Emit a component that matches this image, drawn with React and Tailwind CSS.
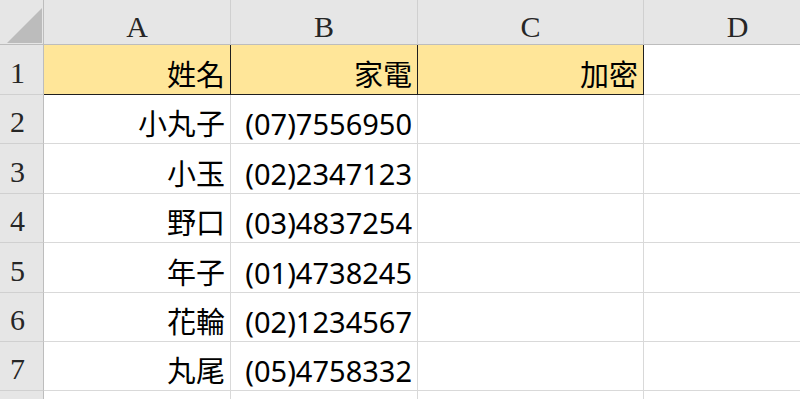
import React from 'react';

const cols = ['A', 'B', 'C', 'D'];
const rowHeights = ['h-[50px]', 'h-[49px]', 'h-[50px]', 'h-[49px]', 'h-[50px]', 'h-[49px]', 'h-[49px]', 'h-[49px]'];

const data = [
  ['姓名', '家電', '加密'],
  ['小丸子', '(07)7556950', ''],
  ['小玉', '(02)2347123', ''],
  ['野口', '(03)4837254', ''],
  ['年子', '(01)4738245', ''],
  ['花輪', '(02)1234567', ''],
  ['丸尾', '(05)4758332', ''],
  ['', '', ''],
];

const serif = { fontFamily: '"Liberation Serif", "DejaVu Serif", serif' };
const body = { fontFamily: '"Noto Sans", "Noto Sans CJK TC", sans-serif' };

export default function App() {
  return (
    <div className="w-[800px] h-[399px] overflow-hidden bg-white">
      <div className="grid grid-cols-[44px_187px_187px_226px_188px]">
        {/* Corner */}
        <div className="h-[45px] bg-[#e6e6e6] border-r border-b border-[#bdbdbd] flex items-end justify-end p-[1px]">
          <svg width="35" height="35" viewBox="0 0 35 35">
            <polygon points="0,35 35,35 35,0" fill="#bcbcbc" />
          </svg>
        </div>
        {/* Column headers */}
        {cols.map((c) => (
          <div
            key={c}
            style={serif}
            className="h-[45px] bg-[#e6e6e6] border-r border-b border-r-[#d0d0d0] border-b-[#bdbdbd] flex items-end justify-center pb-[2px] text-[30px] leading-none text-[#262626]"
          >
            {c}
          </div>
        ))}

        {data.map((row, i) => (
          <React.Fragment key={i}>
            <div
              style={serif}
              className={`${rowHeights[i]} bg-[#e6e6e6] border-r border-b border-r-[#bdbdbd] border-b-[#d0d0d0] flex items-end justify-center pr-[8px] pb-[6px] text-[30px] leading-none text-[#262626]`}
            >
              {i < 7 ? i + 1 : ''}
            </div>
            {row.map((cell, j) => (
              <div
                key={j}
                style={body}
                className={`${rowHeights[i]} border-r border-b flex items-end justify-end pr-[5px] pb-[5px] text-[29px] leading-none text-black ${
                  i === 0 ? 'bg-[#ffe699] border-[#1f1f1f]' : 'border-[#d9d9d9]'
                }`}
              >
                {cell}
              </div>
            ))}
            <div className={`${rowHeights[i]} border-r border-b border-[#d9d9d9]`} />
          </React.Fragment>
        ))}
      </div>
    </div>
  );
}
